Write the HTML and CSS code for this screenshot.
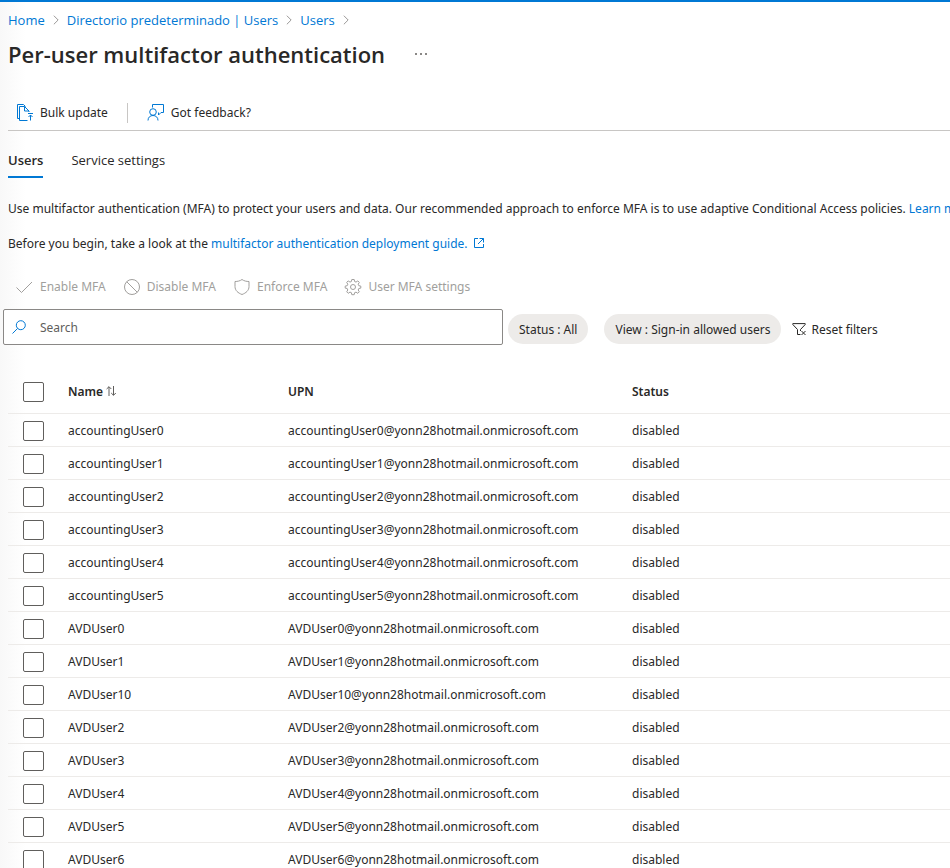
FILE: index.html
```html
<!DOCTYPE html>
<html lang="en">
<head>
<meta charset="utf-8">
<title>Per-user multifactor authentication</title>
<link rel="stylesheet" href="styles.css">
</head>
<body>
<div class="page">
  <nav class="breadcrumb" aria-label="Breadcrumb">
    <a href="#">Home</a>
    <svg class="chevron" viewBox="0 0 7 12"><path d="M1 1l5 5-5 5"/></svg>
    <a href="#">Directorio predeterminado | Users</a>
    <svg class="chevron" viewBox="0 0 7 12"><path d="M1 1l5 5-5 5"/></svg>
    <a href="#">Users</a>
    <svg class="chevron" viewBox="0 0 7 12"><path d="M1 1l5 5-5 5"/></svg>
  </nav>

  <header class="title">
    <h1>Per-user multifactor authentication</h1>
    <button class="more" type="button" aria-label="More"><svg viewBox="0 0 12 2"><path d="M0 0h2v2H0zM5 0h2v2H5zM10 0h2v2h-2z"/></svg></button>
  </header>

  <div class="toolbar">
    <button class="command" type="button">
      <svg class="icon blue" viewBox="0 0 18 18"><path d="M3.500 14.500h-2v-14h6l2 2M11.500 16.500h-8v-14h5l4.500 4.500v1M8.500 2.500v4.500h4.500M14.500 16.500V11M12.500 13l2-2 2 2M12 9.500h5"/></svg>
      <span>Bulk update</span>
    </button>
    <span class="divider"></span>
    <button class="command" type="button">
      <svg class="icon blue" viewBox="0 0 18 18"><path d="M5.500 3.500v-3h11v8h-2.500L11.500 11V8.500M1 16.500c0-3.200 2.200-5 5-5s5 1.800 5 5"/><circle cx="6" cy="8" r="3.300"/></svg>
      <span>Got feedback?</span>
    </button>
  </div>

  <div class="tabs" role="tablist">
    <button class="tab active" role="tab" aria-selected="true" type="button">Users</button>
    <button class="tab" role="tab" aria-selected="false" type="button">Service settings</button>
  </div>

  <p class="intro">Use multifactor authentication (MFA) to protect your users and data. Our recommended approach to enforce MFA is to use adaptive Conditional Access policies. <a href="#">Learn more</a></p>
  <p class="intro">Before you begin, take a look at the <a href="#">multifactor authentication deployment guide.<svg class="external" viewBox="0 0 10 10"><path d="M4 .5H.5v9h9V6M5.500 .5h4v4M9.500 .5L4 6"/></svg></a></p>

  <div class="actions">
    <button type="button" disabled><svg class="icon" viewBox="0 0 18 18"><path d="M.5 9.500l5 5L16 4"/></svg><span>Enable MFA</span></button>
    <button type="button" disabled><svg class="icon" viewBox="0 0 18 18"><circle cx="9" cy="9" r="7.500"/><path d="M3.700 3.700l10.600 10.600"/></svg><span>Disable MFA</span></button>
    <button type="button" disabled><svg class="icon" viewBox="0 0 18 18"><path d="M9 1.500c2 1.500 4.500 2 7 2v5c0 4-3 6.500-7 8-4-1.500-7-4-7-8v-5c2.500 0 5-.5 7-2z"/></svg><span>Enforce MFA</span></button>
    <button type="button" disabled><svg class="icon" viewBox="0 0 18 18"><path d="M7.800 1.500h2.400l.4 2 1.400.6 1.800-1.200 1.500 1.500-1.100 1.800.6 1.500 2 .4v2l-2 .4-.6 1.500 1.100 1.800-1.500 1.500-1.800-1.200-1.400.6-.4 2H7.800l-.4-2-1.400-.6-1.800 1.200-1.500-1.500 1.100-1.800-.6-1.500-2-.4v-2l2-.4.600-1.500-1.100-1.800 1.500-1.500L6 4.100l1.400-.6z"/><circle cx="9" cy="9" r="2.500"/></svg><span>User MFA settings</span></button>
  </div>

  <div class="filters">
    <label class="search">
      <svg viewBox="0 0 14 14"><circle cx="8.800" cy="5.200" r="4.500"/><path d="M5.600 8.400L.5 13.500"/></svg>
      <input type="text" placeholder="Search" aria-label="Search">
    </label>
    <button class="pill" type="button">Status : All</button>
    <button class="pill" type="button">View : Sign-in allowed users</button>
    <button class="reset" type="button">
      <svg viewBox="0 0 14 13"><path d="M8.500 11.500h-3V6.500L.8 1.500V.6h12.400v.9L8.500 6.500V8M9.500 8l4 4M13.500 8l-4 4"/></svg>
      <span>Reset filters</span>
    </button>
  </div>

  <table class="users">
    <colgroup><col class="c-check"><col class="c-name"><col class="c-upn"><col></colgroup>
    <thead>
      <tr><th><input type="checkbox" aria-label="Select all"></th><th>Name <svg class="sort" viewBox="0 0 10 10"><path d="M3 10V.8M.6 3L3 .7 5.300 3M7.500 0v9.200M5.200 7l2.300 2.300L9.800 7"/></svg></th><th>UPN</th><th>Status</th></tr>
    </thead>
    <tbody>
      <tr><td><input type="checkbox" aria-label="Select accountingUser0"></td><td>accountingUser0</td><td>accountingUser0@yonn28hotmail.onmicrosoft.com</td><td>disabled</td></tr>
      <tr><td><input type="checkbox" aria-label="Select accountingUser1"></td><td>accountingUser1</td><td>accountingUser1@yonn28hotmail.onmicrosoft.com</td><td>disabled</td></tr>
      <tr><td><input type="checkbox" aria-label="Select accountingUser2"></td><td>accountingUser2</td><td>accountingUser2@yonn28hotmail.onmicrosoft.com</td><td>disabled</td></tr>
      <tr><td><input type="checkbox" aria-label="Select accountingUser3"></td><td>accountingUser3</td><td>accountingUser3@yonn28hotmail.onmicrosoft.com</td><td>disabled</td></tr>
      <tr><td><input type="checkbox" aria-label="Select accountingUser4"></td><td>accountingUser4</td><td>accountingUser4@yonn28hotmail.onmicrosoft.com</td><td>disabled</td></tr>
      <tr><td><input type="checkbox" aria-label="Select accountingUser5"></td><td>accountingUser5</td><td>accountingUser5@yonn28hotmail.onmicrosoft.com</td><td>disabled</td></tr>
      <tr><td><input type="checkbox" aria-label="Select AVDUser0"></td><td>AVDUser0</td><td>AVDUser0@yonn28hotmail.onmicrosoft.com</td><td>disabled</td></tr>
      <tr><td><input type="checkbox" aria-label="Select AVDUser1"></td><td>AVDUser1</td><td>AVDUser1@yonn28hotmail.onmicrosoft.com</td><td>disabled</td></tr>
      <tr><td><input type="checkbox" aria-label="Select AVDUser10"></td><td>AVDUser10</td><td>AVDUser10@yonn28hotmail.onmicrosoft.com</td><td>disabled</td></tr>
      <tr><td><input type="checkbox" aria-label="Select AVDUser2"></td><td>AVDUser2</td><td>AVDUser2@yonn28hotmail.onmicrosoft.com</td><td>disabled</td></tr>
      <tr><td><input type="checkbox" aria-label="Select AVDUser3"></td><td>AVDUser3</td><td>AVDUser3@yonn28hotmail.onmicrosoft.com</td><td>disabled</td></tr>
      <tr><td><input type="checkbox" aria-label="Select AVDUser4"></td><td>AVDUser4</td><td>AVDUser4@yonn28hotmail.onmicrosoft.com</td><td>disabled</td></tr>
      <tr><td><input type="checkbox" aria-label="Select AVDUser5"></td><td>AVDUser5</td><td>AVDUser5@yonn28hotmail.onmicrosoft.com</td><td>disabled</td></tr>
      <tr><td><input type="checkbox" aria-label="Select AVDUser6"></td><td>AVDUser6</td><td>AVDUser6@yonn28hotmail.onmicrosoft.com</td><td>disabled</td></tr>
    </tbody>
  </table>
</div>
</body>
</html>
```
FILE: styles.css
```css
* { box-sizing: border-box; }

body {
  margin: 0;
  color: #292827;
  font: 12px/20px "Segoe UI", "Noto Sans", "Open Sans", sans-serif;
}

.page {
  height: 100vh;
  overflow: hidden;
  padding-left: 8px;
  border-top: 2px solid #0078d4;
  background: linear-gradient(to right, #f8f8f8, #fff 26px);
}

a { color: #0078d4; text-decoration: none; }

button {
  margin: 0;
  padding: 0;
  border: 0;
  background: none;
  color: inherit;
  font: inherit;
  white-space: nowrap;
}

svg { flex: none; fill: none; stroke: currentColor; }

.icon { width: 18px; height: 18px; }
.blue { color: #0078d4; }

.breadcrumb, .tabs { font-family: "Segoe UI", "Open Sans", sans-serif; font-size: 13px; }

.breadcrumb {
  display: flex;
  align-items: center;
  gap: 8px;
  padding-top: 8px;
  white-space: nowrap;
}
.chevron { width: 6px; height: 12px; color: #8a8886; }

.title {
  display: flex;
  align-items: center;
  gap: 30px;
  height: 48px;
}
h1 {
  margin: 0;
  font-family: "Segoe UI", "Open Sans", sans-serif;
  font-size: 22px;
  line-height: 32px;
  font-weight: 600;
  white-space: nowrap;
}
.more svg { display: block; width: 12px; height: 2px; fill: #8a8886; stroke: none; }

.toolbar {
  display: flex;
  align-items: center;
  gap: 19px;
  margin-top: 16px;
  padding: 2px 8px 0;
  height: 37px;
  border-bottom: 1px solid #c8c6c4;
}
.command, .actions button { display: flex; align-items: center; gap: 6px; }
.divider { width: 1px; height: 20px; background: #c8c6c4; }

.tabs { display: flex; gap: 28px; margin-top: 12px; }
.tab { height: 35px; border-bottom: 2px solid transparent; }
.tab.active { border-color: #0078d4; font-weight: 600; }

.intro { margin: 0; padding-top: 15px; white-space: nowrap; }
.tabs + .intro { padding-top: 21px; }
.external { width: 10px; height: 10px; margin-left: 6px; }

.actions {
  display: flex;
  gap: 17px;
  margin-top: 23px;
  padding-left: 8px;
  color: #a19f9d;
}

.filters { display: flex; align-items: center; margin: 12px 0 0 -5px; }
.search {
  display: flex;
  align-items: center;
  width: 500px;
  height: 36px;
  padding: 0 8px;
  gap: 14px;
  border: 1px solid #8a8886;
  border-radius: 2px;
  background: #fff;
}
.search svg { width: 14px; height: 14px; color: #0078d4; }
.search input {
  flex: 1;
  min-width: 0;
  padding: 2px 0 0;
  border: 0;
  outline: 0;
  background: none;
  color: inherit;
  font: inherit;
}
.search input::placeholder { color: #605e5c; opacity: 1; }
.pill {
  height: 30px;
  margin: 4px 11px 0 5px;
  padding: 2px 11px 0;
  border-radius: 15px;
  background: #edebe9;
}
.reset { display: flex; align-items: center; gap: 5px; margin-top: 5px; }
.reset svg { width: 14px; height: 13px; }

.users {
  width: 100%;
  margin-top: 24px;
  table-layout: fixed;
  border-collapse: separate;
  border-spacing: 0;
}
.c-check { width: 60px; }
.c-name { width: 220px; }
.c-upn { width: 344px; }
.users th, .users td {
  height: 33px;
  padding: 2px 0 0;
  border-bottom: 1px solid #edebe9;
  text-align: left;
  font-weight: 400;
  white-space: nowrap;
}
.users th { height: 45px; font-weight: 600; }
.users th:first-child, .users td:first-child { padding-left: 15px; }
.sort { width: 10px; height: 10px; color: #605e5c; }
.users input {
  display: block;
  appearance: none;
  width: 21px;
  height: 20px;
  margin: 0;
  border: 1px solid #605e5c;
  border-radius: 2px;
  background: #fff;
}
```
